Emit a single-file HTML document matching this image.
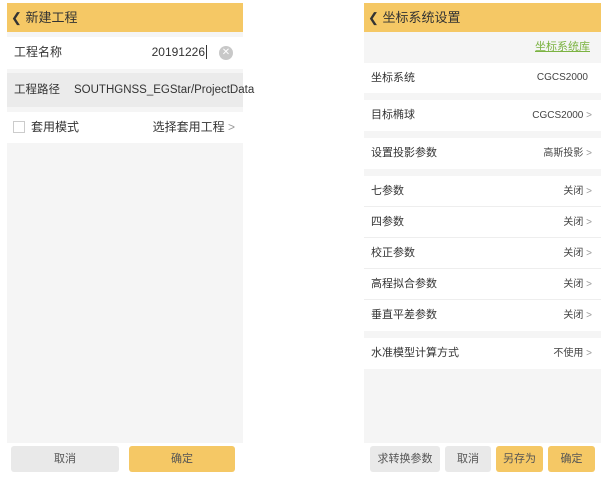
<!DOCTYPE html>
<html><head><meta charset="utf-8"><style>
*{margin:0;padding:0;box-sizing:border-box}
body{width:601px;height:479px;background:#fff;position:relative;overflow:hidden;font-family:"Liberation Sans","Noto Sans CJK SC",sans-serif;color:#333;font-size:11px}
.a{position:absolute}
.hd{background:#f5c865;color:#333;font-size:13px;line-height:29px;padding-left:4px}
.row{position:absolute;background:#fff;line-height:31px}
.row .l{position:absolute;left:7px}
.row .r{position:absolute;right:9px;color:#444;font-size:10px}
.sep{border-bottom:1px solid #eee}
.btn{position:absolute;top:446px;height:26px;line-height:26px;text-align:center;border-radius:3px;font-size:11px;color:#555}
.g{background:#e9e9e9}.y{background:#f5c865}
.ch{color:#999}
</style></head><body>
<div class="a" style="left:7px;top:3px;width:236px;height:440px;background:#f5f5f5"></div>
<div class="a hd" style="left:7px;top:3px;width:236px;height:29px">❮ 新建工程</div>
<div class="row" style="left:7px;top:37px;width:236px;height:32px;font-size:12px"><span class="l">工程名称</span><span class="a" style="right:36px;top:0;color:#333">20191226<span style="border-left:1px solid #333;margin-left:1px"></span></span><span class="a" style="right:10px;top:9px;width:14px;height:14px;border-radius:50%;background:#c8c8c8;color:#fff;font-size:10px;line-height:14px;text-align:center">✕</span></div>
<div class="row" style="left:7px;top:73px;width:236px;height:34px;background:#ebebeb;line-height:34px;font-size:11.5px"><span class="l">工程路径</span><span class="a" style="left:67px">SOUTHGNSS_EGStar/ProjectData</span></div>
<div class="row" style="left:7px;top:112px;width:236px;height:31px;font-size:12px"><span class="a" style="left:6px;top:9px;width:12px;height:12px;border:1px solid #ccc"></span><span class="a" style="left:24px">套用模式</span><span class="a" style="right:8px">选择套用工程 <span class="ch">&gt;</span></span></div>
<div class="btn g" style="left:11px;width:108px">取消</div>
<div class="btn y" style="left:129px;width:106px">确定</div>
<div class="a" style="left:364px;top:3px;width:237px;height:440px;background:#f5f5f5"></div>
<div class="a hd" style="left:364px;top:3px;width:237px;height:29px">❮ 坐标系统设置</div>
<div class="a" style="left:364px;top:32px;width:237px;height:31px;line-height:31px"><span class="a" style="right:11px;color:#7cb342;text-decoration:underline">坐标系统库</span></div>
<div class="row" style="left:364px;top:63px;width:237px;height:30px;line-height:30px"><span class="l">坐标系统</span><span class="r" style="right:13px">CGCS2000</span></div>
<div class="row" style="left:364px;top:100px;width:237px;height:31px"><span class="l">目标椭球</span><span class="r">CGCS2000 <span class="ch">&gt;</span></span></div>
<div class="row" style="left:364px;top:138px;width:237px;height:31px"><span class="l">设置投影参数</span><span class="r">高斯投影 <span class="ch">&gt;</span></span></div>
<div class="row sep" style="left:364px;top:176px;width:237px;height:31px"><span class="l">七参数</span><span class="r">关闭 <span class="ch">&gt;</span></span></div>
<div class="row sep" style="left:364px;top:207px;width:237px;height:31px"><span class="l">四参数</span><span class="r">关闭 <span class="ch">&gt;</span></span></div>
<div class="row sep" style="left:364px;top:238px;width:237px;height:31px"><span class="l">校正参数</span><span class="r">关闭 <span class="ch">&gt;</span></span></div>
<div class="row sep" style="left:364px;top:269px;width:237px;height:31px"><span class="l">高程拟合参数</span><span class="r">关闭 <span class="ch">&gt;</span></span></div>
<div class="row" style="left:364px;top:300px;width:237px;height:31px"><span class="l">垂直平差参数</span><span class="r">关闭 <span class="ch">&gt;</span></span></div>
<div class="row" style="left:364px;top:338px;width:237px;height:31px"><span class="l">水准模型计算方式</span><span class="r">不使用 <span class="ch">&gt;</span></span></div>
<div class="btn g" style="left:370px;width:70px">求转换参数</div>
<div class="btn g" style="left:445px;width:46px">取消</div>
<div class="btn y" style="left:496px;width:47px">另存为</div>
<div class="btn y" style="left:548px;width:47px">确定</div>
</body></html>
